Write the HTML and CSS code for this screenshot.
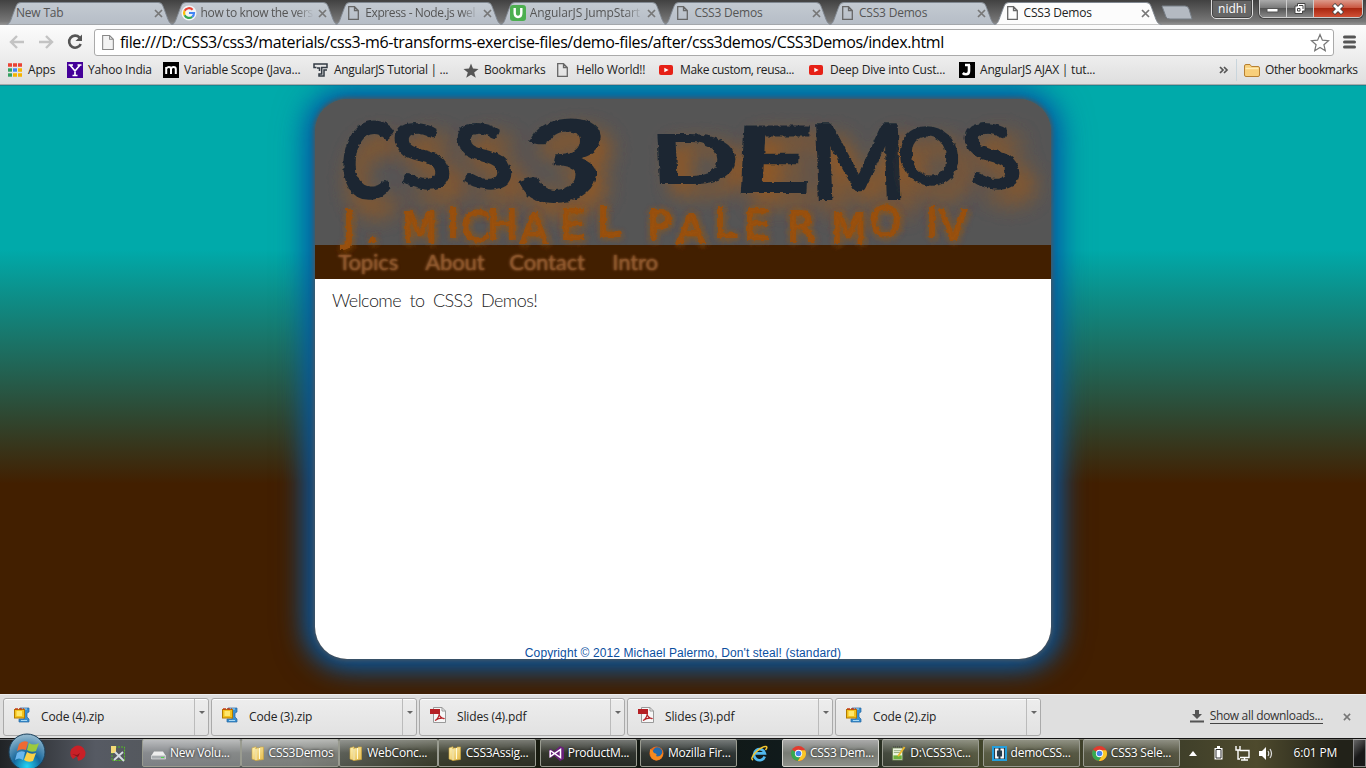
FILE: index.html
```html
<!DOCTYPE html>
<html lang="en">
<head>
<meta charset="utf-8">
<title>CSS3 Demos</title>
<link rel="stylesheet" href="styles.css">
</head>
<body>
<svg class="defs" width="0" height="0">
  <defs>
    <linearGradient id="tabFill" x1="0" y1="0" x2="0" y2="1"><stop offset="0" stop-color="#c3cad2"/><stop offset="1" stop-color="#b6bdc6"/></linearGradient>
    <linearGradient id="folderFill" x1="0" y1="0" x2="1" y2="1"><stop offset="0" stop-color="#fff3b6"/><stop offset="1" stop-color="#e5b949"/></linearGradient>
    <filter id="rough" x="-5%" y="-10%" width="110%" height="120%"><feTurbulence type="fractalNoise" baseFrequency=".2" numOctaves="2" seed="4"/><feDisplacementMap in="SourceGraphic" scale="4" xChannelSelector="R" yChannelSelector="G"/></filter>
    <symbol id="tab" viewBox="0 0 174 24"><path d="M0 23.5C4 23 4 19 10 4Q11 .5 15 .5H158Q162 .5 163 4C169 19 169 23 174 23.5" stroke="#7f8790"/></symbol>
    <symbol id="page" viewBox="0 0 11 14"><path d="M.7.7H6.5L10.3 4.5V13.3H.7ZM6.5.7V4.5H10.3" fill="none" stroke="#666" stroke-width="1.3"/></symbol>
    <symbol id="x" viewBox="0 0 9 9"><path d="M1 1L8 8M8 1L1 8" stroke="#777" stroke-width="1.7"/></symbol>
    <symbol id="yt" viewBox="0 0 14 10"><rect width="14" height="10" rx="2" fill="#e62117"/><path d="M5.3 2.7L9.6 5L5.3 7.3Z" fill="#fff"/></symbol>
    <symbol id="zip" viewBox="0 0 16 16"><path d="M6 1H15V5L13 6V10L15 12V15H5V12H10V4H6Z" fill="#3a8fd0" stroke="#2466a0" stroke-width=".7"/><path d="M7 2H13M7 13.5H13" stroke="#a8d9f5"/><rect x=".5" y="2.5" width="10" height="8.5" fill="#f2c21c" stroke="#b27b00"/><path d="M1 2H10" stroke="#c53e1c" stroke-width="1.5" stroke-dasharray="3 1"/><rect x="2.5" y="4" width="5.5" height="5" fill="#ffe86a"/></symbol>
    <symbol id="pdf" viewBox="0 0 16 16"><path d="M3.5.5H12L15.5 4V15.5H3.5Z" fill="#f6f6f6" stroke="#999"/><path d="M12 .5V4H15.5" fill="none" stroke="#999"/><path d="M0 2H10V7H0Z" fill="#b51f24"/><path d="M5 13.5C8 12 9.5 8 9.2 5.8C8.5 9 12 12 14.5 11.5C11 10.5 8 11.5 5 13.5Z" fill="none" stroke="#b51f24" stroke-width="1.2"/></symbol>
    <symbol id="folder" viewBox="0 0 13 15"><path d="M1 2L5 .7V14.5L1 13ZM5 2H9V1H12.5V13.5L5 14.5Z" fill="url(#folderFill)" stroke="#d1a93d" stroke-width=".6"/><path d="M5 3V14M8.5 2V13" stroke="#fffbd9"/></symbol>
    <symbol id="chrome" viewBox="0 0 14 14"><circle cx="7" cy="7" r="7" fill="#e33b2e"/><path d="M7 7L.9 3.6A7 7 0 0 0 6.4 14L9.5 8.5Z" fill="#36a852"/><path d="M7 3.9H13.2A7 7 0 0 1 6.4 14L9.8 8.5Z" fill="#f9c828"/><circle cx="7" cy="7" r="3.4" fill="#fff"/><circle cx="7" cy="7" r="2.6" fill="#4485ed"/></symbol>
  </defs>
</svg>

<div class="tabstrip">
  <div class="tab"><svg class="tab-shape"><use href="#tab"/></svg><span class="tab-title">New Tab</span><svg class="close"><use href="#x"/></svg></div>
  <div class="tab"><svg class="tab-shape"><use href="#tab"/></svg><svg class="fav" viewBox="0 0 16 16"><circle cx="8" cy="8" r="7.5" fill="#f2f4f6"/><g fill="none" stroke-width="2.2"><path d="M11.6 4.7A5 5 0 0 0 3.6 5.8" stroke="#ea4335"/><path d="M3.6 5.8A5 5 0 0 0 3.6 10.2" stroke="#fbbc05"/><path d="M3.6 10.2A5 5 0 0 0 11.2 11.8" stroke="#34a853"/><path d="M11.2 11.8A5 5 0 0 0 13 8H8" stroke="#4285f4"/></g></svg><span class="tab-title fade">how to know the vers</span><svg class="close"><use href="#x"/></svg></div>
  <div class="tab"><svg class="tab-shape"><use href="#tab"/></svg><svg class="fav page"><use href="#page"/></svg><span class="tab-title fade">Express - Node.js wel</span><svg class="close"><use href="#x"/></svg></div>
  <div class="tab"><svg class="tab-shape"><use href="#tab"/></svg><svg class="fav" viewBox="0 0 16 16"><rect width="16" height="16" rx="3" fill="#4caf50"/><path d="M4.7 3V8Q4.7 12 8 12T11.3 8V3" fill="none" stroke="#fff" stroke-width="2.4"/></svg><span class="tab-title fade wide">AngularJS JumpStart</span><svg class="close"><use href="#x"/></svg></div>
  <div class="tab"><svg class="tab-shape"><use href="#tab"/></svg><svg class="fav page"><use href="#page"/></svg><span class="tab-title">CSS3 Demos</span><svg class="close"><use href="#x"/></svg></div>
  <div class="tab"><svg class="tab-shape"><use href="#tab"/></svg><svg class="fav page"><use href="#page"/></svg><span class="tab-title">CSS3 Demos</span><svg class="close"><use href="#x"/></svg></div>
  <div class="tab active"><svg class="tab-shape"><use href="#tab"/></svg><svg class="fav page"><use href="#page"/></svg><span class="tab-title">CSS3 Demos</span><svg class="close"><use href="#x"/></svg></div>
  <svg class="newtab" viewBox="0 0 32 16"><path d="M1 1H24Q27 1 28 4L31 14H9Q6 14 5 12Z" fill="#b4bac2" stroke="#777e86"/></svg>
  <span class="user">nidhi</span>
  <div class="winbtns">
    <span><svg width="14" height="12"><path d="M1 5.5H12V9H1Z" fill="#fff" stroke="#555"/></svg></span>
    <span><svg width="14" height="13"><path d="M4.5 1.5H12V9H9.5V11.5H2V4H4.5Z" fill="#fff" stroke="#444"/><path d="M4.5 6.5H7V9H4.5ZM6 3.5H10V7" fill="none" stroke="#444"/></svg></span>
    <span class="quit"><svg width="14" height="12"><path d="M2.5 1.5L11.5 10.5M11.5 1.5L2.5 10.5" stroke="#444" stroke-width="4.4"/><path d="M3 2L11 10M11 2L3 10" stroke="#fff" stroke-width="2.8"/></svg></span>
  </div>
</div>

<div class="toolbar">
  <svg class="arrow" viewBox="0 0 16 14"><path d="M15 7H2M8 1L2 7L8 13" fill="none" stroke="#c3c3c3" stroke-width="2.4"/></svg>
  <svg class="arrow" viewBox="0 0 16 14"><path d="M1 7H14M8 1L14 7L8 13" fill="none" stroke="#c3c3c3" stroke-width="2.4"/></svg>
  <svg class="reload" viewBox="0 0 16 16"><path d="M12.5 3.5A6 6 0 1 0 13.7 10" fill="none" stroke="#555" stroke-width="2.6"/><path d="M15 .5V7H8.5Z" fill="#555"/></svg>
  <div class="omnibox">
    <svg class="doc" viewBox="0 0 11 14"><path d="M.5.5H7L10.5 4V13.5H.5ZM7 .5V4H10.5" fill="#f3f3f3" stroke="#888"/></svg>
    <span class="url">file:///D:/CSS3/css3/materials/css3-m6-transforms-exercise-files/demo-files/after/css3demos/CSS3Demos/index.html</span>
    <svg class="star" viewBox="0 0 20 19"><path d="M10 1.5L12.4 7.2L18.5 7.7L13.9 11.7L15.3 17.7L10 14.5L4.7 17.7L6.1 11.7L1.5 7.7L7.6 7.2Z" fill="#fff" stroke="#777" stroke-width="1.2"/></svg>
  </div>
  <svg class="menu" viewBox="0 0 13 14"><path d="M1.5 2H11.5M1.5 7H11.5M1.5 12H11.5" stroke="#555" stroke-width="3" stroke-linecap="round"/></svg>
</div>

<div class="bookmarks">
  <a class="bm b1"><svg width="14" height="14"><path d="M0 2H4M5 2H9M10 2H14" stroke="#ea4335" stroke-width="3.4"/><path d="M0 7H4" stroke="#34a060" stroke-width="3.4"/><path d="M5 7H9" stroke="#4285f4" stroke-width="3.4"/><path d="M10 7H14M5 12H9M10 12H14" stroke="#f5b400" stroke-width="3.4"/><path d="M0 12H4" stroke="#34a060" stroke-width="3.4"/></svg><span>Apps</span></a>
  <a class="bm b2"><svg width="16" height="16"><rect width="16" height="16" fill="#440099"/><path d="M3 3L8 9L13 3M8 8V14M1.5 3H6M10.5 3H14.5M5.5 13.5H10.5" fill="none" stroke="#fff" stroke-width="1.7"/></svg><span>Yahoo India</span></a>
  <a class="bm b3"><svg width="16" height="16"><rect width="16" height="16"/><path d="M3.2 12V5M3.2 7Q4 5 5.8 5Q8 5 8 7V12M8 7Q8.5 5 10.5 5Q12.8 5 12.8 7V12" fill="none" stroke="#fff" stroke-width="2"/></svg><span>Variable Scope (Java...</span></a>
  <a class="bm b4"><svg width="15" height="16"><path d="M3.5 5.5H1V2H14V5.5H8.7V12H6V14H11V8H14M4 6H6.5V9" fill="none" stroke="#333b44" stroke-width="1.5"/></svg><span>AngularJS Tutorial | ...</span></a>
  <a class="bm b5"><svg width="16" height="15" viewBox="0 0 16 15"><path d="M8 .5L10 5.5L15.5 6L11.2 9.5L12.8 14.8L8 11.8L3.2 14.8L4.8 9.5L.5 6L6 5.5Z" fill="#555"/></svg><span>Bookmarks</span></a>
  <a class="bm b6"><svg width="11" height="14"><use href="#page"/></svg><span>Hello World!!</span></a>
  <a class="bm b7"><svg width="14" height="10"><use href="#yt"/></svg><span>Make custom, reusa...</span></a>
  <a class="bm b8"><svg width="14" height="10"><use href="#yt"/></svg><span>Deep Dive into Cust...</span></a>
  <a class="bm b9"><svg width="16" height="16"><rect width="16" height="16"/><path d="M6 3H11M10 3V9Q10 12.3 7 12.3Q5 12.3 3.8 11" fill="none" stroke="#fff" stroke-width="2.6"/></svg><span>AngularJS AJAX | tut...</span></a>
  <svg class="more" width="10" height="8"><path d="M1 1L4 4L1 7M5 1L8 4L5 7" fill="none" stroke="#555" stroke-width="1.7"/></svg>
  <a class="bm other"><svg width="16" height="13"><path d="M.5 11V2Q.5.5 2 .5H6L7.5 2.5H14Q15.5 2.5 15.5 4V11Q15.5 12.5 14 12.5H2Q.5 12.5.5 11Z" fill="#f8cf7a" stroke="#b78032"/><path d="M1.5 4.5H14.5" stroke="#ffebb5" stroke-width="1.5"/></svg><span>Other bookmarks</span></a>
</div>

<main class="viewport">
  <div class="card">
    <header class="banner">
      <svg class="lettering" width="736" height="170" viewBox="315 99 736 170">
        <g class="title" filter="url(#rough)">
          <text transform="translate(338 199) skewX(-4) scale(.8 1.07)">C</text>
          <text transform="translate(402 189) skewX(14) scale(1 .9)">S</text>
          <text transform="translate(464 189) skewX(14) scale(1 .9)">S</text>
          <text transform="translate(511 202) skewX(-10) scale(1.5 1.14)">3</text>
          <text transform="translate(651 184) skewX(3) scale(1.18 .69)">D</text>
          <text transform="translate(730 193) skewX(-3) scale(1.42 .93)">E</text>
          <text transform="translate(811 200) skewX(2) scale(1.02 1.06)">M</text>
          <text transform="translate(900 185) skewX(5) scale(.78 .8)">O</text>
          <text transform="translate(972 189) skewX(14) scale(1 .9)">S</text>
        </g>
        <text class="author" filter="url(#rough)"><tspan x="343 366" y="240 242">J.</tspan> <tspan x="402 447 461 487 520 560 597" y="242 237 241 239 243 239 236">MICHAEL</tspan> <tspan x="647 677 714 744 787 831 869" y="240 243 237 239 241 243 236">PALERMO</tspan> <tspan x="926 939" y="237 240">IV</tspan></text>
      </svg>
    </header>
    <nav class="nav"><a class="n1">Topics</a><a class="n2">About</a><a class="n3">Contact</a><a class="n4">Intro</a></nav>
    <section class="content">Welcome to CSS3 Demos!</section>
    <footer class="copy">Copyright © 2012 Michael Palermo, Don't steal! (standard)</footer>
  </div>
</main>

<div class="downloads">
  <div class="dl"><svg class="ic"><use href="#zip"/></svg><span>Code (4).zip</span><i></i></div>
  <div class="dl"><svg class="ic"><use href="#zip"/></svg><span>Code (3).zip</span><i></i></div>
  <div class="dl"><svg class="ic"><use href="#pdf"/></svg><span>Slides (4).pdf</span><i></i></div>
  <div class="dl"><svg class="ic"><use href="#pdf"/></svg><span>Slides (3).pdf</span><i></i></div>
  <div class="dl"><svg class="ic"><use href="#zip"/></svg><span>Code (2).zip</span><i></i></div>
  <div class="showall"><svg width="14" height="13"><path d="M5 0H9V4H12L7 9L2 4H5ZM0 10.5H14V12.5H0Z" fill="#555"/></svg><span>Show all downloads...</span><svg class="dx" width="8" height="8" viewBox="0 0 9 9"><use href="#x"/></svg></div>
</div>

<div class="taskbar">
  <svg class="orb" viewBox="0 0 38 38"><defs><radialGradient id="orbFill" cx=".5" cy=".9" r=".85"><stop offset="0" stop-color="#21d5f5"/><stop offset=".45" stop-color="#16679c"/><stop offset="1" stop-color="#8fb6cd"/></radialGradient></defs><circle cx="19" cy="19" r="18" fill="url(#orbFill)" stroke="#1c415c"/><path d="M11 11Q15 7 20 9L18 17Q13 15 9 18Z" fill="#ef6a32"/><path d="M21 10Q26 13 31 10L28 18Q23 20 19 17Z" fill="#9cca3c"/><path d="M9 20Q13 17 17 19L15 27Q11 24 7 27Z" fill="#6bb7ee"/><path d="M19 19Q23 22 28 20L25 28Q20 30 16 27Z" fill="#fbd047"/></svg>
  <svg class="red" viewBox="0 0 16 16"><path d="M2 13A7.6 7.6 0 1 1 8 15.8L7 11L3 14Z" fill="#c92027"/><path d="M2 9L7 10L10 8L8 12" fill="#8a1419"/></svg>
  <svg class="tools" viewBox="0 0 16 17"><path d="M2 2H14.5V15.5H2Z" fill="none" stroke="#55b927" stroke-dasharray="2 1"/><path d="M1 1H6V8H1Z" fill="#f4d977"/><path d="M4 15L13 7M5 7L14 16" stroke="#d5dbe2" stroke-width="1.8"/></svg>
  <div class="task light"><svg class="ic" viewBox="0 0 15 14"><path d="M3 5H12L14.5 9H.5Z" fill="#eee"/><path d="M.5 9H14.5V12.5H.5Z" fill="#a9adb0" stroke="#eee" stroke-width=".6"/><path d="M10 11H13" stroke="#4ed34e"/></svg><span>New Volu...</span></div>
  <div class="task light"><svg class="ic"><use href="#folder"/></svg><span>CSS3Demos</span></div>
  <div class="task"><svg class="ic"><use href="#folder"/></svg><span>WebConc...</span></div>
  <div class="task"><svg class="ic"><use href="#folder"/></svg><span>CSS3Assig...</span></div>
  <div class="task gap"><svg class="ic" viewBox="0 0 15 15"><path d="M11 0L15 2V13L11 15L5 9.5L2 12L0 11V4L2 3L5 5.5Z" fill="#68217a"/><path d="M1.2 4.5V10.5L11.5 3.5V11.5L1.2 4.5" fill="none" stroke="#fff" stroke-width="1.5"/></svg><span>ProductM...</span></div>
  <div class="task gap"><svg class="ic" viewBox="0 0 15 15"><circle cx="7.5" cy="7.5" r="7" fill="#e96a19"/><circle cx="8.5" cy="6" r="4.7" fill="#276aa8"/><path d="M1 3Q4 4 5 7Q9 8 7 10Q11 12 14 6Q14 14 7 14.5Q0 13 1 3" fill="#f68a1e"/></svg><span>Mozilla Fir...</span></div>
  <svg class="ie" viewBox="0 0 17 17"><path d="M13.7 11.5A5.5 5.5 0 1 1 13.8 8.3H4" fill="none" stroke="#51b8ee" stroke-width="2.7"/><path d="M2 15Q-1 14 4 8Q11 1 15 1.5Q17 2 14.5 5" fill="none" stroke="#f6c72e" stroke-width="1.4"/></svg>
  <div class="task current"><svg class="ic"><use href="#chrome"/></svg><span>CSS3 Dem...</span></div>
  <div class="task gap"><svg class="ic" viewBox="0 0 15 16"><path d="M1 2H12V15H1Z" fill="#edf5df" stroke="#647b4d"/><path d="M2.5 5H10.5M2.5 7H9" stroke="#8fa77a"/><path d="M2 12H11" stroke="#6eb13a" stroke-width="4"/><path d="M14 1L7 11" stroke="#ebb92d" stroke-width="2"/><path d="M2 1H12" stroke="#333" stroke-dasharray="1 1"/></svg><span>D:\CSS3\c...</span></div>
  <div class="task gap"><svg class="ic" viewBox="0 0 15 15"><rect width="15" height="15" fill="#249edc"/><rect x="2" y="2" width="11" height="11" fill="#263b4b"/><path d="M6.5 3.5H4V11.5H6.5M8.5 3.5H11V11.5H8.5" fill="none" stroke="#fff" stroke-width="1.8"/></svg><span>demoCSS...</span></div>
  <div class="task gap"><svg class="ic"><use href="#chrome"/></svg><span>CSS3 Sele...</span></div>
  <div class="tray">
    <svg width="8" height="5"><path d="M0 5L4 0L8 5Z" fill="#fff"/></svg>
    <svg class="t2" width="9" height="14"><path d="M3 0H6V2H8.5V13.5H.5V2H3Z" fill="#fff"/><path d="M2 3.5H7V12H2Z" fill="none" stroke="#333"/></svg>
    <svg class="t3" width="15" height="15"><path d="M4.5 4.5H14V11.5H5M9.5 12V14M6 14H13M1 0V4H5V0M3 4V13H5" fill="none" stroke="#fff" stroke-width="1.4"/></svg>
    <svg class="t4" width="15" height="13"><path d="M0 4H3L7 0V13L3 9H0Z" fill="#fff"/><path d="M9 4Q10.5 6.5 9 9M11 2Q14 6.5 11 11" fill="none" stroke="#ddd" stroke-width="1.2"/></svg>
    <span class="clock">6:01 PM</span>
    <b class="peek"></b>
  </div>
</div>
</body>
</html>
```
FILE: styles.css
```css
* { box-sizing: border-box; }
body { margin: 0; width: 1366px; height: 768px; overflow: hidden; display: flex; flex-direction: column; font: 12px/16px "Open Sans", "Noto Sans", sans-serif; color: #222; }
svg { flex: none; display: block; }
span { white-space: nowrap; }
.defs { position: absolute; }

.tabstrip { height: 25px; flex: none; display: flex; padding-left: 3px; position: relative; background: linear-gradient(#414141, #777 85%, #969696); }
.tab { width: 164.6px; height: 25px; flex: none; display: flex; align-items: center; padding: 1px 5px 0 13px; position: relative; color: #555; }
.tab-shape { position: absolute; left: 0; top: 2px; width: 174px; height: 23px; fill: url(#tabFill); overflow: visible; }
.tab.active { color: #222; }
.tab.active .tab-shape { fill: #fcfcfc; }
.fav { width: 16px; height: 16px; position: relative; margin-right: 4px; }
.fav.page { width: 11px; height: 14px; margin: 0 6px 0 3px; }
.tab-title { flex: 1; overflow: hidden; position: relative; letter-spacing: -.2px; }
.fade { -webkit-mask-image: linear-gradient(90deg, #000 84%, transparent); mask-image: linear-gradient(90deg, #000 84%, transparent); letter-spacing: -.38px; }
.wide { letter-spacing: -.1px; }
.close { width: 9px; height: 9px; position: relative; margin-left: 4px; }
.newtab { width: 32px; height: 16px; margin: 5px 0 0 6px; }
.user { width: 42px; height: 20px; margin: -1px 0 0 18px; border: 1px solid #ddd; border-radius: 0 0 5px 5px; background: #666; color: #fff; text-align: center; line-height: 18px; box-shadow: inset 0 0 0 1px #444; }
.winbtns { display: flex; height: 19px; width: 104px; margin: -1px 0 0 6px; border: 1px solid #ccc; border-radius: 0 0 5px 5px; overflow: hidden; box-shadow: 0 0 0 1px #444; }
.winbtns span { width: 27px; display: flex; align-items: center; justify-content: center; border-right: 1px solid #ccc; background: linear-gradient(#aaa, #777 48%, #555 50%, #888); }
.winbtns .quit { width: 48px; border: 0; background: linear-gradient(#dd9a8a, #c9533d 48%, #a92710 50%, #d05035); }

.toolbar { height: 33px; flex: none; display: flex; align-items: center; padding: 1px 8px 0 9px; background: linear-gradient(#fcfcfc, #ededed); }
.arrow { width: 16px; height: 14px; margin-right: 13px; }
.reload { width: 16px; height: 16px; margin-right: 11px; }
.omnibox { width: 1240px; height: 27px; display: flex; align-items: center; border: 1px solid #aaa; border-radius: 3px; background: #fff; padding: 0 3px 0 7px; font-size: 16px; line-height: 24px; color: #000; }
.doc { width: 12px; height: 15px; margin-right: 6px; }
.url { flex: 1; letter-spacing: -.39px; }
.star { width: 20px; height: 19px; }
.menu { width: 13px; height: 14px; margin-left: 9px; }

.bookmarks { height: 27px; flex: none; position: relative; display: flex; align-items: center; background: linear-gradient(#ededed, #dedede); border-bottom: 1px solid #aaa; padding: 0 8px 2px; }
.bm { display: flex; align-items: center; gap: 5px; height: 22px; letter-spacing: -.2px; flex: none; }
.b1 { width: 59px; gap: 6px; }
.b2 { width: 96px; }
.b3 { width: 150px; }
.b4 { width: 150px; gap: 6px; letter-spacing: -.32px; }
.b5 { width: 94px; }
.b6 { width: 102px; gap: 8px; }
.b7 { width: 150px; gap: 7px; letter-spacing: -.38px; }
.b8 { width: 150px; gap: 7px; }
.b9 { width: 260px; }
.more { margin-right: 7px; }
.other { border-left: 1px solid #c9d5dc; padding-left: 7px; letter-spacing: -.4px; }

.viewport { flex: none; height: 609px; padding-top: 14px; background: linear-gradient(#0aa 0, #0aa 27%, #421f00 65.5%); overflow: hidden; box-shadow: inset 0 1px #118993; }
.card { width: 736px; height: 560px; margin: 0 auto; border-radius: 32px; background: linear-gradient(#555 120px, #fff 0); display: flex; flex-direction: column; box-shadow: 0 0 5px 1px #555, 0 0 26px 7px #0559a5, 0 0 36px 4px rgba(0,90,170,.6); }
.banner { height: 146px; flex: none; background: #555; border-radius: 32px 32px 0 0; position: relative; z-index: 1; }
.lettering { overflow: visible; }
.title { font: 900 100px Lato, sans-serif; fill: #1c2833; text-shadow: 10px 14px 22px rgba(190,92,0,.68); }
.author { font: 41px "DejaVu Sans", sans-serif; fill: #975010; stroke: #975010; stroke-width: 1.8; text-shadow: 1px 1px 7px rgba(164,85,0,.7); }
.nav { height: 34px; flex: none; background: #421f00; display: flex; padding: 3px 0 0 23px; font: 22px/28px Lato, sans-serif; letter-spacing: -.1px; color: rgba(158,100,55,.3); text-shadow: 0 0 3px #9e6437, 1px 0 2px rgba(158,100,55,.5); }
.n1 { width: 87px; }
.n2 { width: 84px; }
.n3 { width: 103px; }
.content { flex: 1; padding: 8px 17px; font: 300 18px/26px Lato, sans-serif; letter-spacing: -.55px; word-spacing: 4px; color: #222; }
.copy { height: 14px; flex: none; font: 12px/16px "Liberation Sans", sans-serif; letter-spacing: .1px; text-align: center; color: #0b4f9f; }

.downloads { height: 44px; flex: none; display: flex; align-items: center; padding: 0 15px 0 3px; background: #dfdfdf; border-top: 1px solid #eee; gap: 2px; }
.dl { width: 206px; height: 38px; display: flex; align-items: center; border: 1px solid #aaa; border-radius: 3px; background: linear-gradient(#ededed, #e2e2e2); padding-left: 10px; letter-spacing: -.15px; box-shadow: inset 0 1px #fff; }
.dl .ic { width: 16px; height: 16px; margin-top: -3px; }
.dl span { flex: 1; margin-left: 11px; }
.dl i { width: 14px; height: 36px; border-left: 1px solid #bbb; padding: 12px 0 0 4px; }
.dl i::after { content: ""; display: block; width: 0; border: 3px solid transparent; border-top-color: #666; border-bottom: 0; }
.showall { flex: 1; display: flex; align-items: center; justify-content: flex-end; color: #333; }
.showall span { margin: 0 20px 0 6px; letter-spacing: -.32px; border-bottom: 1px solid #444; line-height: 14px; }

.taskbar { height: 30px; flex: none; display: flex; align-items: center; position: relative; color: #fff; background: linear-gradient(90deg, #202326, #565a63 7%, #50544f 22%, #252816 32%, #14170e 42%, #101a1b 57%, #42452a 72%, #3c3d29 85%, #4e4a2d 92%, #222219 98%); border-top: 1px solid #111; padding-bottom: 1px; }
.taskbar::after { content: ""; position: absolute; inset: 0 0 auto; height: 1px; background: rgba(255,255,255,.3); }
.orb { width: 38px; height: 38px; margin: -6px 0 0 8px; align-self: flex-start; position: relative; z-index: 2; }
.red { width: 16px; height: 16px; margin-left: 24px; }
.tools { width: 16px; height: 17px; margin: 0 16px 0 24px; }
.task { width: 98.6px; height: 28px; flex: none; display: flex; align-items: center; padding-left: 8px; gap: 4px; border: 1px solid #999b90; border-radius: 2px; background: linear-gradient(rgba(255,255,255,.42), rgba(255,255,255,.13) 50%, rgba(255,255,255,.08)); letter-spacing: -.25px; text-shadow: 0 0 3px #000; }
.task.light { background: linear-gradient(rgba(255,255,255,.6), rgba(255,255,255,.3) 50%, rgba(255,255,255,.24)); }
.task.current { margin-left: 14px; width: 97px; background: linear-gradient(#aaa, #777b74 50%, #8e918a); border-color: #d3d3cd; }
.task.gap { width: 97px; margin-left: 3.3px; }
.task .ic { width: 15px; height: 15px; }
.ie { width: 17px; height: 17px; margin-left: 14px; }
.tray { flex: 1; display: flex; align-items: center; }
.tray > svg:first-child { margin-left: 9px; }
.t2 { margin-left: 17px; }
.t3 { margin-left: 12px; }
.t4 { margin-left: 9px; }
.clock { margin-left: auto; margin-right: 16px; letter-spacing: -.2px; text-shadow: 0 0 2px #000; }
.peek { width: 13px; height: 28px; border: 1px solid #888; background: linear-gradient(135deg, #666, #191919 55%); }
```
